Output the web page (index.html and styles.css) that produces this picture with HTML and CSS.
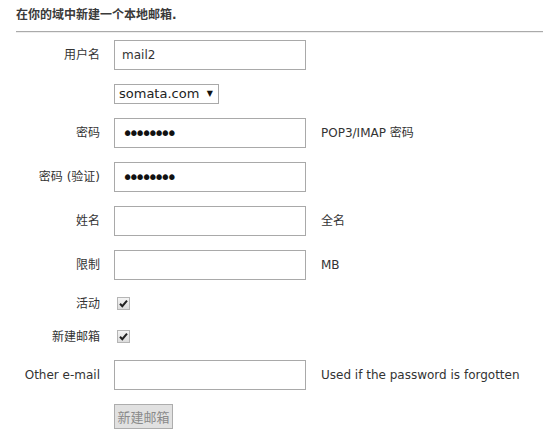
FILE: index.html
```html
<!DOCTYPE html>
<html lang="zh">
<head>
<meta charset="utf-8">
<title>新建邮箱</title>
<link rel="stylesheet" href="styles.css">
</head>
<body>
<div class="page">
  <h1 class="title">在你的域中新建一个本地邮箱.</h1>
  <div class="rule"></div>
  <form class="form">
    <label class="lbl">用户名</label>
    <input class="txt" type="text" value="mail2">
    <span class="hint"></span>

    <span class="lbl"></span>
    <div class="field-sel"><span class="sel-wrap"><select class="sel"><option>somata.com</option></select></span></div>
    <span class="hint"></span>

    <label class="lbl">密码</label>
    <input class="txt pw" type="password" value="12345678">
    <span class="hint">POP3/IMAP 密码</span>

    <label class="lbl">密码 (验证)</label>
    <input class="txt pw" type="password" value="12345678">
    <span class="hint"></span>

    <label class="lbl">姓名</label>
    <input class="txt" type="text" value="">
    <span class="hint">全名</span>

    <label class="lbl">限制</label>
    <input class="txt" type="text" value="">
    <span class="hint">MB</span>

    <label class="lbl chk-row">活动</label>
    <div class="chk-row"><span class="chk"><svg viewBox="0 0 13 13" width="13" height="13"><path d="M3 6.8 L5.3 9.2 L10 3.6" fill="none" stroke="#222" stroke-width="2"/></svg></span></div>
    <span class="hint chk-row"></span>

    <label class="lbl chk-row">新建邮箱</label>
    <div class="chk-row"><span class="chk"><svg viewBox="0 0 13 13" width="13" height="13"><path d="M3 6.8 L5.3 9.2 L10 3.6" fill="none" stroke="#222" stroke-width="2"/></svg></span></div>
    <span class="hint chk-row"></span>

    <label class="lbl">Other e-mail</label>
    <input class="txt" type="text" value="">
    <span class="hint">Used if the password is forgotten</span>

    <span class="lbl"></span>
    <div><button class="btn" type="button" disabled>新建邮箱</button></div>
    <span class="hint"></span>
  </form>
</div>
</body>
</html>
```
FILE: styles.css
```css
html, body {
  margin: 0;
  padding: 0;
  background: #fff;
}
body {
  font-family: "DejaVu Sans", Verdana, "Noto Sans CJK SC", sans-serif;
  font-size: 12px;
  color: #333;
}
.page {
  padding: 6px 8px 0 16px;
}
.title {
  margin: 0;
  font-size: 12px;
  font-weight: bold;
  line-height: 18px;
  color: #3a3a3a;
}
.rule {
  margin-top: 7px;
  height: 0;
  border-top: 1px solid #aaa;
  border-bottom: 1px solid #eee;
}
.form {
  display: grid;
  grid-template-columns: 84px 192px auto;
  column-gap: 14px;
  row-gap: 14px;
  margin-top: 7px;
  align-items: center;
}
.lbl {
  text-align: right;
  line-height: 16px;
  font-family: "DejaVu Sans", "Noto Sans CJK SC", sans-serif;
}
.hint {
  padding-left: 1px;
  line-height: 16px;
}
.txt {
  box-sizing: border-box;
  width: 192px;
  height: 30px;
  margin: 0;
  padding: 0 7px;
  border: 1px solid #a9a9a9;
  border-radius: 0;
  font-family: "DejaVu Sans", sans-serif;
  font-size: 12px;
  color: #333;
  background: #fff;
  outline: none;
}
.pw {
  font-size: 19px;
  letter-spacing: -4.9px;
  color: #111;
}
.field-sel {
  height: 20px;
}
.sel-wrap {
  position: relative;
  display: inline-block;
}
.sel-wrap::after {
  content: "▼";
  position: absolute;
  right: 6px;
  top: 5px;
  font-size: 8px;
  line-height: 10px;
  color: #111;
  pointer-events: none;
}
.sel {
  appearance: none;
  -webkit-appearance: none;
  box-sizing: border-box;
  width: 105px;
  height: 20px;
  margin: 0;
  padding: 0 0 0 4px;
  border: 1px solid #a9a9a9;
  border-radius: 0;
  background: #fff;
  font-family: "DejaVu Sans", sans-serif;
  font-size: 13px;
  color: #222;
  line-height: 18px;
}
.chk-row {
  height: 19px;
  display: flex;
  align-items: center;
}
.lbl.chk-row {
  justify-content: flex-end;
}
.chk {
  box-sizing: border-box;
  display: inline-flex;
  width: 13px;
  height: 13px;
  margin-left: 3px;
  border: 1px solid #b5b5b5;
  background: linear-gradient(#f4f4f4, #dcdcdc);
}
.chk svg {
  display: block;
  margin: -1px;
}
.btn {
  box-sizing: border-box;
  width: 59px;
  height: 25px;
  margin: 0;
  padding: 0 2px;
  border: 1px solid #adadad;
  border-radius: 0;
  background: #e1e1e1;
  color: #8a8a8a;
  font-family: "Noto Sans CJK SC", sans-serif;
  font-size: 13px;
  line-height: 23px;
}
```
